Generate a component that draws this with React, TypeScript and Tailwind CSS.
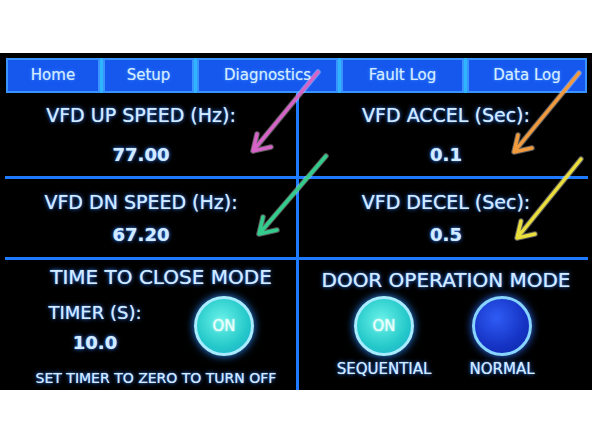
import React from 'react';

const tabs = [
  { label: 'Home', w: 'w-[94px]' },
  { label: 'Setup', w: 'w-[91px]' },
  { label: 'Diagnostics', w: 'w-[141px]' },
  { label: 'Fault Log', w: 'w-[123px]' },
  { label: 'Data Log', w: 'w-[120px]' },
];

const glow = '[text-shadow:0_0_4px_#2f7bff,0_0_1px_#9fd4ff]';

// annotation arrows drawn over the photo
const arrows = [
  { color: '#d664c8', from: [318, 72], tip: [253, 151], a: [257, 134], b: [271, 147] },
  { color: '#34cc8c', from: [326, 156], tip: [259, 234], a: [263, 217], b: [277, 230] },
  { color: '#f19a3e', from: [579, 73], tip: [514, 152], a: [518, 135], b: [532, 148] },
  { color: '#e9de3c', from: [581, 159], tip: [517, 238], a: [521, 221], b: [535, 234] },
];

function Arrows() {
  return (
    <svg className="absolute inset-0 pointer-events-none" width={592} height={444} viewBox="0 0 592 444">
      {arrows.map((ar, i) => (
        <g key={i} fill="none" strokeLinecap="round" strokeLinejoin="round">
          <path
            d={`M${ar.from[0]} ${ar.from[1]} L${ar.tip[0]} ${ar.tip[1]} M${ar.a[0]} ${ar.a[1]} L${ar.tip[0]} ${ar.tip[1]} L${ar.b[0]} ${ar.b[1]}`}
            stroke="#ffffff"
            strokeOpacity={0.35}
            strokeWidth={5.5}
          />
          <path
            d={`M${ar.from[0]} ${ar.from[1]} L${ar.tip[0]} ${ar.tip[1]} M${ar.a[0]} ${ar.a[1]} L${ar.tip[0]} ${ar.tip[1]} L${ar.b[0]} ${ar.b[1]}`}
            stroke={ar.color}
            strokeWidth={3.5}
          />
        </g>
      ))}
    </svg>
  );
}

function OnButton() {
  return (
    <div className="w-[60px] h-[60px] rounded-full border-[3px] border-[#a8ecff] bg-[radial-gradient(circle_at_45%_40%,#6af2ea,#25c9c9_60%,#1ca6cf)] shadow-[0_0_8px_#2a8cff] flex items-center justify-center">
      <span className="text-[15px] text-[#eafffb] [text-shadow:0_0_2px_#ffffff]">ON</span>
    </div>
  );
}

function NormalButton() {
  return (
    <div className="w-[60px] h-[60px] rounded-full border-[3px] border-[#86d4ff] bg-[radial-gradient(circle_at_40%_35%,#2f5cf5,#1533c4_60%,#0d28a6)] shadow-[0_0_8px_#2a6cff]" />
  );
}

export default function App() {
  return (
    <div className="relative w-[592px] h-[444px] bg-white flex flex-col font-['DejaVu_Sans',sans-serif] text-[#d3ebff]">
      <div className="h-[53px]" />
      <div className="h-[337px] bg-black flex flex-col">
        {/* tab strip */}
        <div className="mt-[5px] ml-[6px] mr-[5px] h-[35px] flex gap-[3px] bg-[#2fb4ff]">
          {tabs.map((t) => (
            <div
              key={t.label}
              className={`${t.w} h-full border-2 border-[#3a94ff] bg-[#1658ee] flex items-center justify-center text-[15px] ${glow}`}
            >
              {t.label}
            </div>
          ))}
        </div>

        <div className="ml-[5px] mr-[4px] flex-1 flex flex-col">
          {/* row 1 */}
          <div className="h-[86px] flex border-b-[3px] border-[#1f7aff]">
            <div className="w-[294px] border-r-[3px] border-[#1f7aff] flex flex-col items-center pr-[19px] pt-[11px]">
              <div className={`text-[19px] leading-[22px] ${glow}`}>VFD UP SPEED (Hz):</div>
              <div className={`mt-[16px] text-[18px] leading-[26px] font-bold ${glow}`}>77.00</div>
            </div>
            <div className="flex-1 flex flex-col items-center pl-[5px] pt-[11px]">
              <div className={`text-[19px] leading-[22px] ${glow}`}>VFD ACCEL (Sec):</div>
              <div className={`mt-[16px] text-[18px] leading-[26px] font-bold ${glow}`}>0.1</div>
            </div>
          </div>

          {/* row 2 */}
          <div className="h-[81px] flex border-b-[3px] border-[#1f7aff]">
            <div className="w-[294px] border-r-[3px] border-[#1f7aff] flex flex-col items-center pr-[19px] pt-[12px]">
              <div className={`text-[19px] leading-[22px] ${glow}`}>VFD DN SPEED (Hz):</div>
              <div className={`mt-[9px] text-[18px] leading-[26px] font-bold ${glow}`}>67.20</div>
            </div>
            <div className="flex-1 flex flex-col items-center pl-[5px] pt-[12px]">
              <div className={`text-[19px] leading-[22px] ${glow}`}>VFD DECEL (Sec):</div>
              <div className={`mt-[9px] text-[18px] leading-[26px] font-bold ${glow}`}>0.5</div>
            </div>
          </div>

          {/* row 3 */}
          <div className="flex-1 flex">
            <div className="w-[294px] border-r-[3px] border-[#1f7aff] flex flex-col pt-[6px]">
              <div className={`pl-[21px] text-center text-[20px] leading-[22px] ${glow}`}>TIME TO CLOSE MODE</div>
              <div className="mt-[8px] h-[60px] flex">
                <div className="ml-[40px] w-[100px] flex flex-col items-center pt-[7px]">
                  <div className={`text-[18px] leading-[20px] ${glow}`}>TIMER (S):</div>
                  <div className={`mt-[8px] text-[18px] leading-[24px] font-bold ${glow}`}>10.0</div>
                </div>
                <div className="ml-[49px]">
                  <OnButton />
                </div>
              </div>
              <div className={`mt-[14px] pl-[11px] text-center text-[14px] leading-[16px] ${glow}`}>SET TIMER TO ZERO TO TURN OFF</div>
            </div>
            <div className="flex-1 flex flex-col pt-[9px]">
              <div className={`pl-[5px] text-center text-[20px] leading-[22px] ${glow}`}>DOOR OPERATION MODE</div>
              <div className="mt-[5px] ml-[35px] flex gap-[18px]">
                <div className="w-[100px] flex flex-col items-center">
                  <OnButton />
                  <div className={`mt-[4px] text-[15px] leading-[18px] ${glow}`}>SEQUENTIAL</div>
                </div>
                <div className="w-[100px] flex flex-col items-center">
                  <NormalButton />
                  <div className={`mt-[4px] text-[15px] leading-[18px] ${glow}`}>NORMAL</div>
                </div>
              </div>
            </div>
          </div>
        </div>
      </div>
      <div className="flex-1" />
      <Arrows />
    </div>
  );
}
